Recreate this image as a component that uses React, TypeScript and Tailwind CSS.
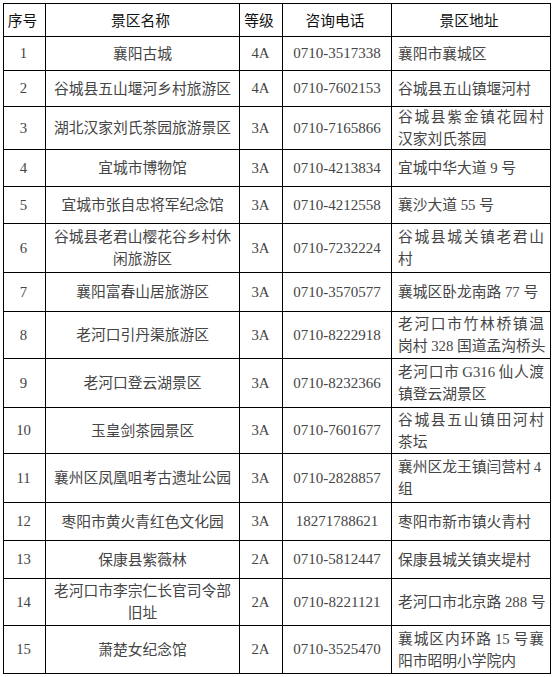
import React from "react";

type Row = {
  n: string;
  name: string[];
  lv: string;
  tel: string;
  addr: string[];
};

const rows: Row[] = [
  { n: "1", name: ["襄阳古城"], lv: "4A", tel: "0710-3517338", addr: ["襄阳市襄城区"] },
  { n: "2", name: ["谷城县五山堰河乡村旅游区"], lv: "4A", tel: "0710-7602153", addr: ["谷城县五山镇堰河村"] },
  { n: "3", name: ["湖北汉家刘氏茶园旅游景区"], lv: "3A", tel: "0710-7165866", addr: ["谷城县紫金镇花园村", "汉家刘氏茶园"] },
  { n: "4", name: ["宜城市博物馆"], lv: "3A", tel: "0710-4213834", addr: ["宜城中华大道 9 号"] },
  { n: "5", name: ["宜城市张自忠将军纪念馆"], lv: "3A", tel: "0710-4212558", addr: ["襄沙大道 55 号"] },
  { n: "6", name: ["谷城县老君山樱花谷乡村休", "闲旅游区"], lv: "3A", tel: "0710-7232224", addr: ["谷城县城关镇老君山", "村"] },
  { n: "7", name: ["襄阳富春山居旅游区"], lv: "3A", tel: "0710-3570577", addr: ["襄城区卧龙南路 77 号"] },
  { n: "8", name: ["老河口引丹渠旅游区"], lv: "3A", tel: "0710-8222918", addr: ["老河口市竹林桥镇温", "岗村 328 国道孟沟桥头"] },
  { n: "9", name: ["老河口登云湖景区"], lv: "3A", tel: "0710-8232366", addr: ["老河口市 G316 仙人渡", "镇登云湖景区"] },
  { n: "10", name: ["玉皇剑茶园景区"], lv: "3A", tel: "0710-7601677", addr: ["谷城县五山镇田河村", "茶坛"] },
  { n: "11", name: ["襄州区凤凰咀考古遗址公园"], lv: "3A", tel: "0710-2828857", addr: ["襄州区龙王镇闫营村 4", "组"] },
  { n: "12", name: ["枣阳市黄火青红色文化园"], lv: "3A", tel: "18271788621", addr: ["枣阳市新市镇火青村"] },
  { n: "13", name: ["保康县紫薇林"], lv: "2A", tel: "0710-5812447", addr: ["保康县城关镇夹堤村"] },
  { n: "14", name: ["老河口市李宗仁长官司令部", "旧址"], lv: "2A", tel: "0710-8221121", addr: ["老河口市北京路 288 号"] },
  { n: "15", name: ["萧楚女纪念馆"], lv: "2A", tel: "0710-3525470", addr: ["襄城区内环路 15 号襄", "阳市昭明小学院内"] },
];

const cell = "border-r border-b border-black flex items-center overflow-visible";
const dataFont = "font-['Liberation_Serif','Noto_Sans_CJK_SC',serif] text-[14.75px] text-[#454545]";

function JustifiedLine({ text }: { text: string }) {
  const tokens = text.match(/[A-Za-z0-9]+|[^\sA-Za-z0-9]/g) || [];
  return (
    <div className="flex justify-between whitespace-nowrap leading-[22px]">
      {tokens.map((t, i) =>
        /[A-Za-z0-9]/.test(t) ? (
          <span key={i} className="px-[3px]">
            {t}
          </span>
        ) : (
          <span key={i}>{t}</span>
        )
      )}
    </div>
  );
}

function Header() {
  const h = "font-['Noto_Sans_CJK_SC',sans-serif] text-[14.75px] text-[#111] justify-center pr-[4px]";
  return (
    <>
      <div className={`${cell} ${h}`}>序号</div>
      <div className={`${cell} ${h}`}>景区名称</div>
      <div className={`${cell} ${h}`}>等级</div>
      <div className={`${cell} ${h}`}>咨询电话</div>
      <div className={`${cell} ${h}`}>景区地址</div>
    </>
  );
}

export default function App() {
  return (
    <div className="bg-white w-[554px] h-[677px] overflow-hidden">
      <div className="ml-[3px] mt-[3px] w-max border-l border-t border-black grid grid-cols-[42px_194px_43px_109px_159px] grid-rows-[33px_34px_36px_43px_37px_37px_49px_39px_47px_49px_46px_49px_38px_38px_47px_48px]">
        <Header />
        {rows.map((r) => (
          <React.Fragment key={r.n}>
            <div className={`${cell} ${dataFont} justify-center pr-[2px]`}>{r.n}</div>
            <div className={`${cell} ${dataFont} flex-col justify-center`}>
              {r.name.map((l, i) => (
                <div key={i} className="whitespace-nowrap text-center leading-[22px]">
                  {l}
                </div>
              ))}
            </div>
            <div className={`${cell} ${dataFont} justify-center pr-[1px]`}>{r.lv}</div>
            <div className={`${cell} ${dataFont} justify-center text-[15px]`}>{r.tel}</div>
            <div className={`${cell} ${dataFont} flex-col justify-center items-stretch pl-[6px] pr-[6px]`}>
              {r.addr.length > 1 ? (
                r.addr.map((l, i) =>
                  i < r.addr.length - 1 ? (
                    <JustifiedLine key={i} text={l} />
                  ) : (
                    <div key={i} className="whitespace-nowrap leading-[22px]">
                      {l}
                    </div>
                  )
                )
              ) : (
                <div className="whitespace-nowrap leading-[22px]">{r.addr[0]}</div>
              )}
            </div>
          </React.Fragment>
        ))}
      </div>
    </div>
  );
}
